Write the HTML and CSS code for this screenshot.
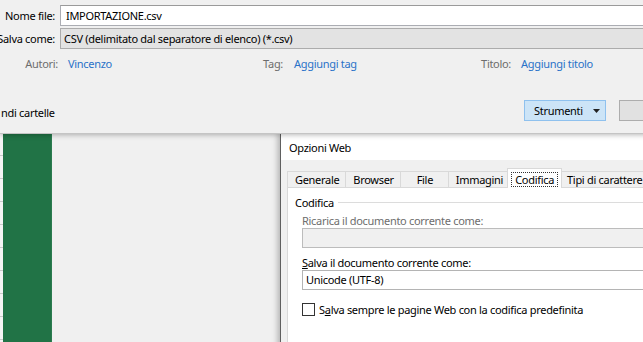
FILE: index.html
```html
<!DOCTYPE html>
<html lang="it">
<head>
<meta charset="utf-8">
<title>Salva con nome</title>
<link rel="stylesheet" href="styles.css">
</head>
<body>
<div class="screen">
  <header class="savebar">
    <div class="row">
      <label class="lbl">Nome file:</label>
      <div class="field">IMPORTAZIONE.csv</div>
    </div>
    <div class="row">
      <label class="lbl">Salva come:</label>
      <div class="field field-select">CSV (delimitato dal separatore di elenco) (*.csv)</div>
    </div>
    <div class="meta">
      <div class="meta-item m1"><span class="meta-lbl">Autori:</span><span class="meta-val">Vincenzo</span></div>
      <div class="meta-item m2"><span class="meta-lbl">Tag:</span><span class="meta-val">Aggiungi tag</span></div>
      <div class="meta-item m3"><span class="meta-lbl">Titolo:</span><span class="meta-val">Aggiungi titolo</span></div>
    </div>
    <div class="actions">
      <span class="folders">ndi cartelle</span>
      <button class="btn btn-tools"><span>Strumenti</span><svg class="caret" width="7" height="4" viewBox="0 0 7 4"><path d="M0 0h7L3.5 4z" fill="#222"/></svg></button>
      <button class="btn btn-save"></button>
    </div>
  </header>
  <main class="workspace">
    <div class="rowheads"></div>
    <div class="green"></div>
    <div class="backstage"></div>
    <section class="dialog">
      <div class="dialog-title">Opzioni Web</div>
      <div class="dialog-body">
        <div class="tabs">
          <div class="tab">Generale</div>
          <div class="tab">Browser</div>
          <div class="tab tab-file">File</div>
          <div class="tab">Immagini</div>
          <div class="tab active"><span class="focus">Codifica</span></div>
          <div class="tab">Tipi di carattere</div>
        </div>
        <div class="panel">
          <div class="group-head"><span>Codifica</span></div>
          <div class="group-body">
            <div class="note">Ricarica il documento corrente come:</div>
            <div class="input-disabled"></div>
            <div class="field-label"><u>S</u>alva il documento corrente come:</div>
            <div class="combo">Unicode (UTF-8)</div>
            <div class="check-row"><span class="box"></span><span>S<u>a</u>lva sempre le pagine Web con la codifica predefinita</span></div>
          </div>
        </div>
      </div>
    </section>
  </main>
</div>
</body>
</html>
```
FILE: styles.css
```css
* { box-sizing: border-box; margin: 0; padding: 0; }
html, body { width: 643px; height: 342px; overflow: hidden; }
body {
  font-family: "Noto Sans", "Segoe UI", sans-serif;
  font-size: 11px;
  letter-spacing: -0.3px;
  color: #000;
  background: #f0f0f0;
}
.screen {
  position: relative;
  width: 720px;
  height: 342px;
  display: flex;
  flex-direction: column;
}
.savebar {
  height: 133px;
  flex: none;
  background: #f0f0f0;
  padding-top: 5px;
  position: relative;
  z-index: 3;
  box-shadow: 0 1px 0 #c4c4c4, 0 2px 5px rgba(0, 0, 0, 0.28);
}
.row { display: flex; align-items: center; height: 21px; }
.row + .row { margin-top: 2px; }
.lbl {
  width: 55px;
  flex: none;
  display: flex;
  justify-content: flex-end;
  white-space: nowrap;
  margin-right: 5px;
}
.field {
  flex: 1;
  height: 21px;
  border: 1px solid #abadb3;
  border-top-color: #9a9a9a;
  background: #fff;
  padding-left: 5px;
  line-height: 19px;
  margin-right: 20px;
  white-space: nowrap;
}
.field-select {
  background: #e3e3e3;
  border-color: #acacac;
  padding-left: 3px;
}
.meta {
  margin-top: 7px;
  height: 16px;
  line-height: 16px;
  display: grid;
  grid-template-columns: 240px 215px 1fr;
}
.meta-item { display: flex; gap: 10px; white-space: nowrap; }
.meta-lbl { flex: none; display: flex; justify-content: flex-end; color: #6d6d6d; }
.m1 .meta-lbl { width: 58px; }
.m2 .meta-lbl { width: 43px; }
.m2 { gap: 11px; }
.m3 .meta-lbl { width: 56px; }
.meta-val { color: #2a72c8; }
.actions {
  margin-top: 28px;
  height: 21px;
  display: flex;
  align-items: center;
  padding-right: 20px;
}
.folders { align-self: flex-end; line-height: 16px; padding-left: 1px; white-space: nowrap; }
.btn {
  font: inherit;
  letter-spacing: inherit;
  color: #000;
  height: 21px;
}
.btn-tools {
  margin-left: auto;
  width: 82px;
  background: #cce4f7;
  border: 1px solid #8fc1ee;
  display: flex;
  align-items: center;
  justify-content: space-between;
  padding: 0 5px 0 9px;
}
.btn-save {
  margin-left: 13px;
  width: 81px;
  background: #e1e1e1;
  border: 1px solid #adadad;
}
.workspace { flex: 1; display: flex; position: relative; }
.rowheads {
  width: 3px;
  flex: none;
  background: repeating-linear-gradient(#f4f4f4 0 22px, #c9c9c9 22px 23px);
}
.green { width: 49px; flex: none; background: #217346; border-right: 1px solid #2c7c50; }
.backstage { flex: 1; background: #f0f0f0; }
.dialog {
  position: absolute;
  left: 280px;
  top: 0;
  width: 430px;
  height: 240px;
  background: #f0f0f0;
  border-left: 1px solid #5f5f5f;
  box-shadow: -2px 0 6px rgba(0, 0, 0, 0.28);
  z-index: 2;
}
.dialog-title {
  height: 27px;
  background: #fff;
  padding: 2px 0 0 8px;
  line-height: 25px;
}
.dialog-body { padding: 8px 0 0 6px; }
.tabs { display: flex; align-items: flex-end; height: 19px; position: relative; z-index: 1; }
.tab {
  height: 16px;
  border: 1px solid #d9d9d9;
  border-bottom: 0;
  padding: 0 6px 0 7px;
  line-height: 15px;
  margin-left: -1px;
  background: #f0f0f0;
  white-space: nowrap;
}
.tab:first-child { margin-left: 0; }
.tab-file { min-width: 49px; text-align: center; }
.tab.active {
  height: 20px;
  margin: 0 -2px -1px -3px;
  padding: 3px 4px 0;
  background: #fff;
  position: relative;
  z-index: 1;
}
.focus { display: inline-block; outline: 1px dotted #333; outline-offset: 0; padding: 0 3px; line-height: 13px; }
.panel {
  border: 1px solid #d9d9d9;
  background: #fff;
  height: 200px;
  padding: 6px 0 0 7px;
}
.group-head { display: flex; align-items: center; height: 16px; }
.group-head::after { content: ""; flex: 1; border-top: 1px solid #dcdcdc; margin-left: 4px; }
.group-body { padding: 0 10px 0 7px; }
.note { color: #6d6d6d; line-height: 15px; margin-top: 3px; }
.input-disabled { height: 20px; border: 1px solid #bcbcbc; background: #f0f0f0; }
.field-label { margin-top: 7px; line-height: 15px; }
.combo {
  height: 20px;
  border: 1px solid #b4b4b4;
  background: #fff;
  padding-left: 3px;
  line-height: 18px;
}
.check-row { display: flex; align-items: center; gap: 4px; margin-top: 12px; line-height: 15px; }
.box { width: 13px; height: 13px; border: 1px solid #333; background: #fff; flex: none; }
```
